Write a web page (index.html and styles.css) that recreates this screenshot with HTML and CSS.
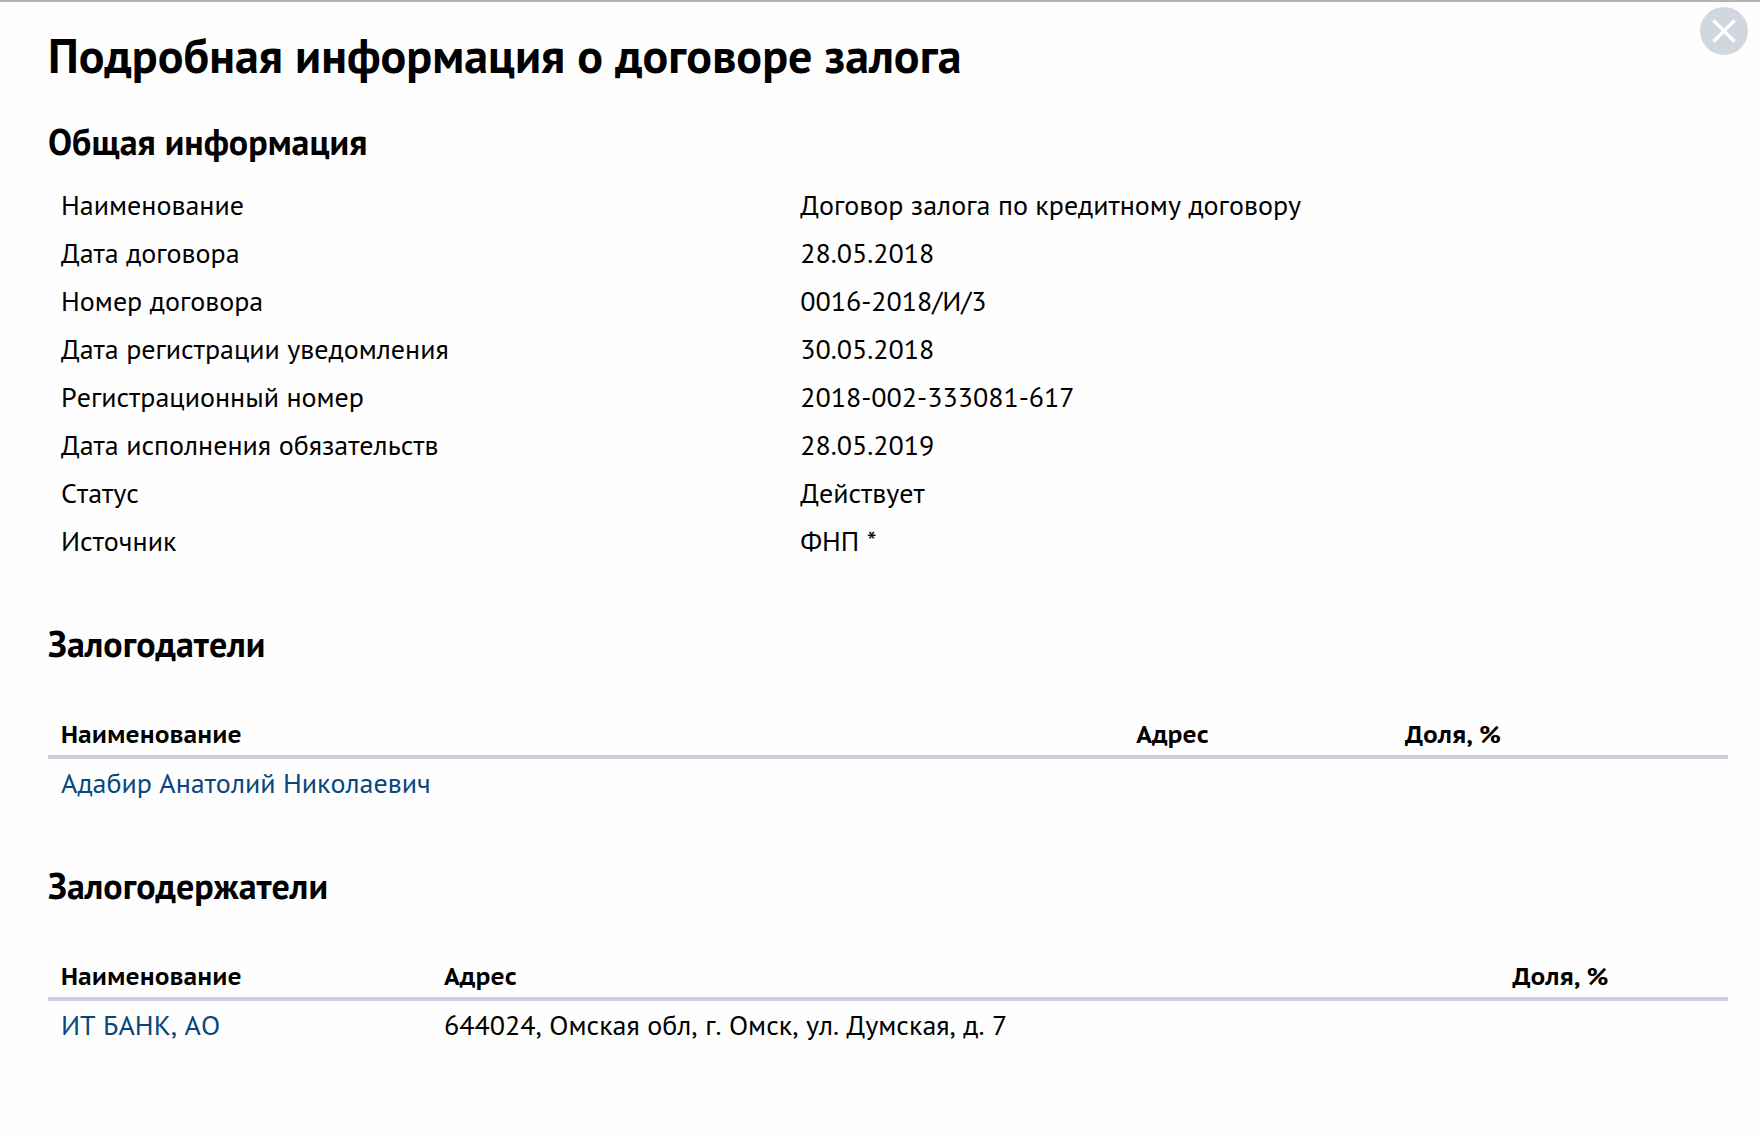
FILE: index.html
```
<!DOCTYPE html>
<html lang="ru">
<head>
    <meta charset="UTF-8">
    <meta name="viewport" content="width=device-width, initial-scale=1.0">
    <title>Подробная информация о договоре залога</title>
    <link rel="stylesheet" href="styles.css">
</head>
<body>
    <div class="modal">
        <button class="close" type="button" aria-label="Закрыть">
            <svg width="48" height="48" viewBox="0 0 48 48">
                <circle cx="24" cy="24" r="24" fill="#d0d7de"/>
                <path d="M13.5 13.5l21 21M34.5 13.5l-21 21" stroke="#fff" stroke-width="3.4"/>
            </svg>
        </button>

        <h1>Подробная информация о договоре залога</h1>

        <h2>Общая информация</h2>
        <table class="info">
            <tr><th scope="row">Наименование</th><td>Договор залога по кредитному договору</td></tr>
            <tr><th scope="row">Дата договора</th><td>28.05.2018</td></tr>
            <tr><th scope="row">Номер договора</th><td>0016-2018/И/3</td></tr>
            <tr><th scope="row">Дата регистрации уведомления</th><td>30.05.2018</td></tr>
            <tr><th scope="row">Регистрационный номер</th><td>2018-002-333081-617</td></tr>
            <tr><th scope="row">Дата исполнения обязательств</th><td>28.05.2019</td></tr>
            <tr><th scope="row">Статус</th><td>Действует</td></tr>
            <tr><th scope="row">Источник</th><td>ФНП *</td></tr>
        </table>

        <h2>Залогодатели</h2>
        <table class="list pledgers">
            <thead>
                <tr><th class="name">Наименование</th><th class="address">Адрес</th><th>Доля, %</th></tr>
            </thead>
            <tbody>
                <tr><td><a href="#">Адабир Анатолий Николаевич</a></td><td></td><td></td></tr>
            </tbody>
        </table>

        <h2>Залогодержатели</h2>
        <table class="list holders">
            <thead>
                <tr><th class="name">Наименование</th><th class="address">Адрес</th><th>Доля, %</th></tr>
            </thead>
            <tbody>
                <tr><td><a href="#">ИТ БАНК, АО</a></td><td>644024, Омская обл, г. Омск, ул. Думская, д. 7</td><td></td></tr>
            </tbody>
        </table>
    </div>
</body>
</html>
```
FILE: styles.css
```
body {
    margin: 0;
    background: #fefefe;
    color: #000;
    font-family: 'PT Sans', 'Noto Sans', sans-serif;
    font-size: 28px;
    font-kerning: none;
    line-height: 32px;
}
.modal {
    position: relative;
    border-top: 2px solid #b4b4b4;
    padding: 21px 32px 48px 48px;
}
.close {
    position: absolute;
    top: 5px;
    right: 12px;
    padding: 0;
    border: none;
    background: none;
    cursor: pointer;
}
.close svg {
    display: block;
}
h1 {
    margin: 0 0 35px;
    font-size: 48px;
    line-height: 64px;
}
h2 {
    margin: 0 0 19px;
    font-size: 36px;
    line-height: 40px;
}
table {
    width: 100%;
    table-layout: fixed;
    border-collapse: separate;
    border-spacing: 0;
    margin-bottom: 59px;
}
th,
td {
    height: 32px;
    padding: 8px 13px;
    text-align: left;
}
.info th {
    width: 44%;
    box-sizing: border-box;
    height: 48px;
    font-weight: normal;
}
.list {
    margin-top: 48px;
}
.list th {
    box-sizing: border-box;
    padding: 7px 13px 4px;
    border-bottom: 4px solid #cad0da;
    font-family: 'PT Sans Caption', 'PT Sans', 'Noto Sans', sans-serif;
    font-size: 24px;
}
.pledgers .name {
    width: 64%;
}
.pledgers .address {
    width: 16%;
}
.holders .name {
    width: 22.8%;
}
.holders .address {
    width: 63.6%;
}
a {
    color: #07477f;
    text-decoration: none;
}
```
